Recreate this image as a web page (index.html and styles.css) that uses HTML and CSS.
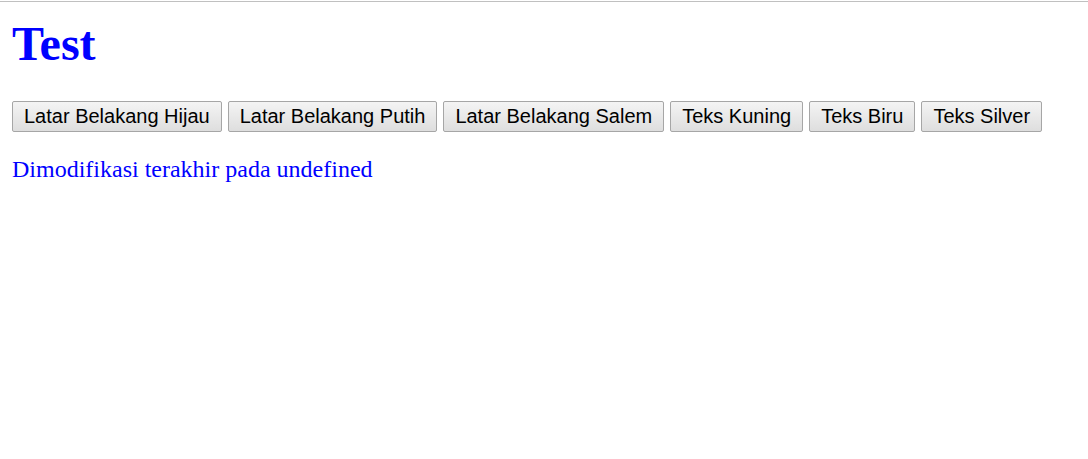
FILE: index.html
```html
<!DOCTYPE html>
<html>
<head>
<meta charset="utf-8">
<title>Test</title>
<link rel="stylesheet" href="styles.css">
</head>
<body>
<div class="page">
  <h1 class="title">Test</h1>
  <div class="buttons">
    <button class="btn">Latar Belakang Hijau</button>
    <button class="btn">Latar Belakang Putih</button>
    <button class="btn">Latar Belakang Salem</button>
    <button class="btn">Teks Kuning</button>
    <button class="btn">Teks Biru</button>
    <button class="btn">Teks Silver</button>
  </div>
  <p class="modified">Dimodifikasi terakhir pada undefined</p>
</div>
</body>
</html>
```
FILE: styles.css
```css
html, body {
  margin: 0;
  padding: 0;
  background: #ffffff;
}
.page {
  margin-top: 1px;
  border-top: 1px solid #c0c0c0;
  padding: 0 12px;
  font-family: "Liberation Serif", "Times New Roman", serif;
}
.title {
  margin: 14px 0 0 0;
  font-size: 48px;
  font-weight: bold;
  color: #0000ff;
  line-height: 55px;
}
.buttons {
  display: flex;
  gap: 6px;
  margin-top: 30px;
}
.btn {
  height: 31px;
  padding: 0 11px;
  border: 1px solid #a6a6a6;
  border-radius: 2px;
  background: linear-gradient(#f4f4f4, #dedede);
  font-family: "Liberation Sans", Arial, sans-serif;
  font-size: 20px;
  color: #000000;
  line-height: 29px;
}
.modified {
  margin: 23px 0 0 0;
  font-size: 24px;
  line-height: 28px;
  color: #0000ff;
}
```
